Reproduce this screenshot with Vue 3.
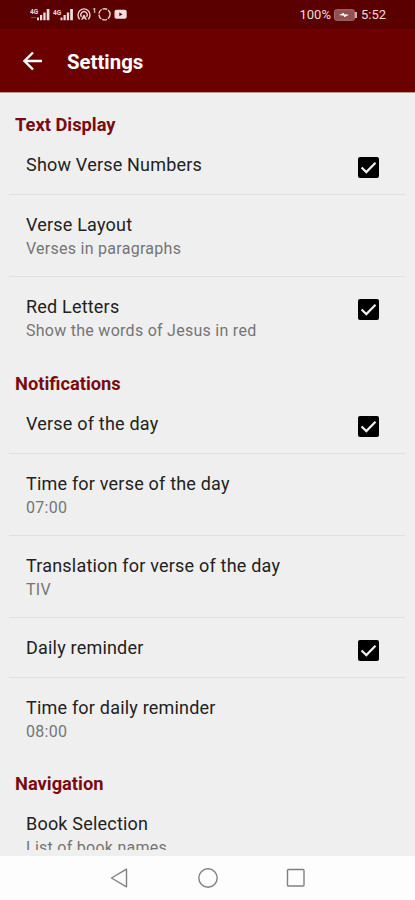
<template>
  <div class="screen">
    <header class="top">
      <div class="status-bar">
        <svg class="status-icons" width="100" height="16" viewBox="0 0 100 16">
          <text x="0" y="8.5" class="net">4G</text>
          <g class="fill">
            <path d="M7 12.5h2v2.7H7zM10 10h2.2v5.2h-2.2zM13.3 7.5h2.3v7.7h-2.3zM16.7 4h2.7v11.2h-2.7z" />
            <path d="M30.5 12.5h2v2.7h-2zM33.5 10h2.2v5.2h-2.2zM36.8 7.5h2.3v7.7h-2.3zM40.2 4h2.7v11.2h-2.7z" />
          </g>
          <path class="faint" d="M1 12.5h5" />
          <text x="23" y="9.5" class="net">4G</text>
          <g class="line">
            <path d="M49.8 14.2a6 6 0 1 1 8.4 0" />
            <path d="M51.4 11.8a3.2 3.2 0 1 1 5.2 0" />
            <path d="M54 10l-2.2 4.8M54 10l2.2 4.8M52.6 13h2.8" />
          </g>
          <text x="62.5" y="7.5" class="net">1</text>
          <circle class="ring" cx="74.5" cy="9.3" r="5.6" />
          <rect class="fill" x="84.5" y="4.8" width="12.2" height="9" rx="2" />
          <path class="play" d="M89.3 7.4v3.8l3.2-1.9z" />
        </svg>
        <div class="status-right">
          <span class="percent">100%</span>
          <svg width="24" height="12" viewBox="0 0 24 12">
            <rect x="0.5" y="0.7" width="20" height="10.6" rx="2" fill="#935050" stroke="#a87070" />
            <path d="M22 3v6" stroke="#efdada" stroke-width="1.6" />
            <path d="M5 6l5-2.3v1.5l5 .6-5 2.4V6.7z" fill="#fff" />
          </svg>
          <span class="clock">5:52</span>
        </div>
      </div>
      <div class="app-bar">
        <svg class="back" width="20" height="20" viewBox="0 0 20 20">
          <path d="M19 10H2M10 1.5L1.5 10l8.5 8.5" />
        </svg>
        <h1>Settings</h1>
      </div>
    </header>

    <main class="list">
      <section v-for="section in sections" :key="section.name">
        <h2>{{ section.name }}</h2>
        <div v-for="item in section.items" :key="item.title" class="item" @click="toggle(item)">
          <div class="item-text">
            <div class="title">{{ item.title }}</div>
            <div v-if="item.summary" class="summary">{{ item.summary }}</div>
          </div>
          <span v-if="'checked' in item" class="checkbox" :class="{ off: !item.checked }">
            <svg v-if="item.checked" width="21" height="21" viewBox="0 0 21 21">
              <path d="M3.6 10.5l4.7 4.6 9.2-9.3" />
            </svg>
          </span>
        </div>
      </section>
    </main>

    <nav class="nav-bar">
      <svg width="20" height="20" viewBox="0 0 20 20">
        <path d="M16.5 1.2v17.6L1.5 10z" />
      </svg>
      <svg width="20" height="20" viewBox="0 0 20 20">
        <circle cx="10" cy="10" r="9.2" />
      </svg>
      <svg width="20" height="20" viewBox="0 0 20 20">
        <rect x="1.5" y="1.5" width="16.5" height="16.5" rx="1" />
      </svg>
    </nav>
  </div>
</template>

<script setup>
import { ref } from "vue";

const sections = ref([
  {
    name: "Text Display",
    items: [
      { title: "Show Verse Numbers", checked: true },
      { title: "Verse Layout", summary: "Verses in paragraphs" },
      { title: "Red Letters", summary: "Show the words of Jesus in red", checked: true },
    ],
  },
  {
    name: "Notifications",
    items: [
      { title: "Verse of the day", checked: true },
      { title: "Time for verse of the day", summary: "07:00" },
      { title: "Translation for verse of the day", summary: "TIV" },
      { title: "Daily reminder", checked: true },
      { title: "Time for daily reminder", summary: "08:00" },
    ],
  },
  {
    name: "Navigation",
    items: [{ title: "Book Selection", summary: "List of book names" }],
  },
]);

const toggle = (item) => {
  if ("checked" in item) item.checked = !item.checked;
};
</script>

<style>
body {
  margin: 0;
}
</style>

<style scoped>
.screen {
  display: flex;
  flex-direction: column;
  height: 900px;
  overflow: hidden;
  background: #efefef;
  font-family: Roboto, "Liberation Sans", sans-serif;
}

.top {
  flex: none;
  height: 92px;
  background: #6c0000;
  border-bottom: 1px solid #b59a9a;
  box-sizing: content-box;
}

.status-bar {
  display: flex;
  justify-content: space-between;
  height: 29px;
  padding: 0 29px 0 30px;
  background: #5a0000;
}

.status-icons {
  margin-top: 5px;
}

.net {
  fill: #efdcdc;
  font-size: 6.5px;
  font-weight: 700;
}

.fill {
  fill: #f3dede;
}

.line,
.ring {
  fill: none;
  stroke: #e8cccc;
  stroke-width: 1.4;
}

.ring {
  stroke-dasharray: 5 0.9;
}

.faint {
  stroke: #8f4a4a;
}

.play {
  fill: #5a0000;
}

.status-right {
  display: flex;
  align-items: center;
  height: 29px;
  color: #efdcdc;
  font-size: 13px;
}

.percent {
  margin-right: 3px;
}

.clock {
  margin-left: 3px;
}

.app-bar {
  display: flex;
  align-items: center;
  height: 63px;
  padding-left: 23px;
}

.back path {
  fill: none;
  stroke: #fff;
  stroke-width: 2.4;
}

h1 {
  margin: 2px 0 0 24px;
  color: #fff;
  font-size: 20.4px;
  font-weight: 700;
  line-height: 24px;
}

.list {
  flex: 1;
  min-height: 0;
  margin-bottom: 6px;
  padding-top: 7px;
  overflow: hidden;
}

h2 {
  margin: 0;
  padding: 14px 15px 0;
  color: #780c12;
  font-size: 18.3px;
  font-weight: 700;
  line-height: 22px;
}

section:nth-child(2) h2 {
  padding-top: 15px;
}

.item {
  display: flex;
  align-items: flex-start;
  margin: 0 10px 0 9px;
  padding: 18px 26px 17px 17px;
  border-bottom: 1px solid #dfdfdf;
}

h2 + .item {
  padding-top: 17px;
}

.item:last-child {
  border-bottom: none;
}

.item-text {
  flex: 1;
  white-space: nowrap;
}

.title {
  color: #222;
  font-size: 18px;
  letter-spacing: 0.2px;
  line-height: 24px;
}

.summary {
  margin: 1px 0 -1px;
  color: #757575;
  font-size: 16px;
  letter-spacing: 0.27px;
  line-height: 22px;
}

/* the box hangs below a one-line title without making its row taller */
.checkbox {
  width: 21px;
  height: 21px;
  margin: 4px 0 -4px;
  border-radius: 2px;
  background: #000;
}

.checkbox.off {
  box-sizing: border-box;
  border: 2px solid #000;
  background: transparent;
}

.checkbox svg {
  display: block;
}

.checkbox path {
  fill: none;
  stroke: #efefef;
  stroke-width: 2.2;
}

.nav-bar {
  display: flex;
  flex: none;
  justify-content: center;
  align-items: center;
  gap: 68px;
  height: 44px;
  background: #fdfdfd;
}

.nav-bar svg {
  fill: none;
  stroke: #808080;
  stroke-width: 1.4;
  stroke-linejoin: round;
}
</style>
